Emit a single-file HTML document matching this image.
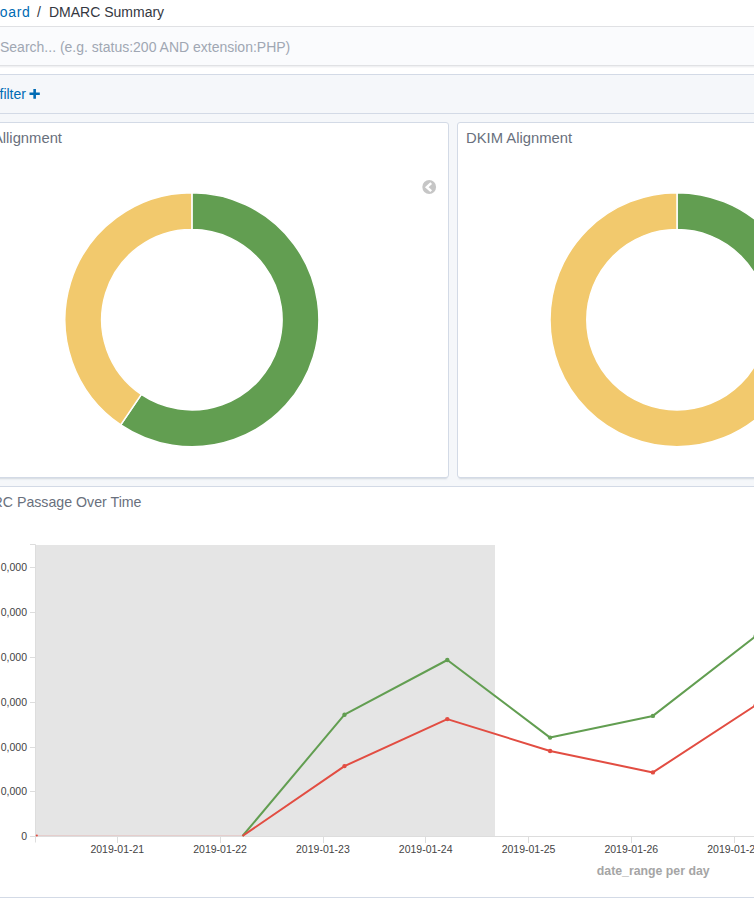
<!DOCTYPE html>
<html><head><meta charset="utf-8">
<style>
html,body{margin:0;padding:0;background:#fff;}
body{width:754px;height:898px;overflow:hidden;position:relative;font-family:"Liberation Sans",sans-serif;}
.a{position:absolute;}
.t{position:absolute;white-space:nowrap;line-height:1;}
</style></head>
<body>
<!-- breadcrumb -->
<div class="t" style="left:-0.2px;top:5px;font-size:14px;letter-spacing:0.65px;color:#006BB4;">oard</div>
<div class="t" style="left:37px;top:5px;font-size:14px;color:#343741;">/</div>
<div class="t" style="left:49px;top:5px;font-size:14px;color:#343741;">DMARC Summary</div>
<!-- search bar -->
<div class="a" style="left:0;top:26px;width:754px;height:1px;background:#E0E1E4;"></div>
<div class="a" style="left:0;top:27px;width:754px;height:38px;background:#FAFBFD;"></div>
<div class="a" style="left:0;top:65px;width:754px;height:1px;background:#E0E1E4;"></div>
<div class="a" style="left:0;top:66px;width:754px;height:1px;background:#F0F1F3;"></div>
<div class="a" style="left:0;top:67px;width:754px;height:1px;background:#F9F9FA;"></div>
<div class="t" style="left:0px;top:40px;font-size:14px;color:#A0A7B3;">Search... (e.g. status:200 AND extension:PHP)</div>
<!-- filter bar -->
<div class="a" style="left:0;top:74px;width:754px;height:1px;background:#D3DAE6;"></div>
<div class="a" style="left:0;top:75px;width:754px;height:38px;background:#F5F7FA;"></div>
<div class="a" style="left:0;top:113px;width:754px;height:1px;background:#D3DAE6;"></div>
<div class="t" style="left:-0.5px;top:87px;font-size:14px;color:#006BB4;">filter</div>
<svg class="a" style="left:0;top:80px" width="60" height="30" viewBox="0 80 60 30"><path d="M29.5,92.5H39.8V95.1H29.5Z M33.35,88.9H35.95V98.8H33.35Z" fill="#006BB4"/></svg>
<!-- dashboard bg -->
<div class="a" style="left:0;top:114px;width:754px;height:784px;background:#F5F7FA;"></div>
<!-- panel 1 -->
<div class="a" style="left:-40px;top:122px;width:487px;height:354px;background:#fff;border:1px solid #D3DAE6;border-radius:3px;box-shadow:0 1px 1px -1px rgba(152,162,179,0.2),0 3px 2px -2px rgba(152,162,179,0.35);"></div>
<div class="t" style="right:692px;top:131px;font-size:14.8px;color:#69707D;">SPF Allignment</div>
<!-- panel 2 -->
<div class="a" style="left:457px;top:122px;width:400px;height:354px;background:#fff;border:1px solid #D3DAE6;border-radius:3px;box-shadow:0 1px 1px -1px rgba(152,162,179,0.2),0 3px 2px -2px rgba(152,162,179,0.35);"></div>
<div class="t" style="left:466px;top:131px;font-size:14.8px;color:#69707D;">DKIM Alignment</div>
<!-- panel 3 -->
<div class="a" style="left:-40px;top:486px;width:900px;height:410px;background:#fff;border:1px solid #D3DAE6;border-radius:3px;"></div>
<div class="t" style="right:612.5px;top:494.7px;font-size:14.2px;color:#69707D;">DMARC Passage Over Time</div>

<!--CHART--><svg class="a" style="left:0;top:0;font-family:'Liberation Sans',sans-serif" width="754" height="898" viewBox="0 0 754 898">
<path d="M191.90,192.70A127,127 0 1 1 120.70,424.86L141.33,394.39A90.2,90.2 0 1 0 191.90,229.50Z" fill="#629E51" stroke="#fff" stroke-width="1.5"/>
<path d="M120.70,424.86A127,127 0 0 1 191.90,192.70L191.90,229.50A90.2,90.2 0 0 0 141.33,394.39Z" fill="#F2C96D" stroke="#fff" stroke-width="1.5"/>
<path d="M677.00,192.70A127,127 0 0 1 804.00,319.70L767.20,319.70A90.2,90.2 0 0 0 677.00,229.50Z" fill="#629E51" stroke="#fff" stroke-width="1.5"/>
<path d="M804.00,319.70A127,127 0 1 1 677.00,192.70L677.00,229.50A90.2,90.2 0 1 0 767.20,319.70Z" fill="#F2C96D" stroke="#fff" stroke-width="1.5"/>
<circle cx="429.2" cy="187" r="6.9" fill="#C6C6C6"/>
<path d="M431.2,183.2 L426.8,187.2 L431.2,191.2" fill="none" stroke="#fff" stroke-width="2.5"/>
<rect x="36" y="545" width="459" height="291" fill="#E5E5E5"/>
<path d="M30,544.5H35.5V836.5" fill="none" stroke="#DDDDDD" stroke-width="1"/>
<line x1="30" y1="836.5" x2="35.5" y2="836.5" stroke="#DDDDDD" stroke-width="1"/>
<line x1="30" y1="791.5" x2="35.5" y2="791.5" stroke="#DDDDDD" stroke-width="1"/>
<line x1="30" y1="747.5" x2="35.5" y2="747.5" stroke="#DDDDDD" stroke-width="1"/>
<line x1="30" y1="702.5" x2="35.5" y2="702.5" stroke="#DDDDDD" stroke-width="1"/>
<line x1="30" y1="657.5" x2="35.5" y2="657.5" stroke="#DDDDDD" stroke-width="1"/>
<line x1="30" y1="612.5" x2="35.5" y2="612.5" stroke="#DDDDDD" stroke-width="1"/>
<line x1="30" y1="567.5" x2="35.5" y2="567.5" stroke="#DDDDDD" stroke-width="1"/>
<line x1="35.5" y1="836.5" x2="754" y2="836.5" stroke="#DDDDDD" stroke-width="1"/>
<line x1="35.5" y1="836" x2="35.5" y2="842.5" stroke="#DDDDDD" stroke-width="1"/>
<rect x="117" y="837" width="1" height="6" fill="#DDDDDD"/>
<rect x="220" y="837" width="1" height="6" fill="#DDDDDD"/>
<rect x="323" y="837" width="1" height="6" fill="#DDDDDD"/>
<rect x="425" y="837" width="1" height="6" fill="#DDDDDD"/>
<rect x="528" y="837" width="1" height="6" fill="#DDDDDD"/>
<rect x="631" y="837" width="1" height="6" fill="#DDDDDD"/>
<rect x="734" y="837" width="1" height="6" fill="#DDDDDD"/>
<text x="27" y="840" text-anchor="end" font-size="10.5" fill="#444">0</text>
<text x="27" y="795" text-anchor="end" font-size="10.5" fill="#444">0,000</text>
<text x="27" y="751" text-anchor="end" font-size="10.5" fill="#444">0,000</text>
<text x="27" y="706" text-anchor="end" font-size="10.5" fill="#444">0,000</text>
<text x="27" y="661" text-anchor="end" font-size="10.5" fill="#444">0,000</text>
<text x="27" y="616" text-anchor="end" font-size="10.5" fill="#444">0,000</text>
<text x="27" y="571" text-anchor="end" font-size="10.5" fill="#444">0,000</text>
<text x="117.3" y="853" text-anchor="middle" font-size="10.5" fill="#444">2019-01-21</text>
<text x="220.1" y="853" text-anchor="middle" font-size="10.5" fill="#444">2019-01-22</text>
<text x="322.9" y="853" text-anchor="middle" font-size="10.5" fill="#444">2019-01-23</text>
<text x="425.7" y="853" text-anchor="middle" font-size="10.5" fill="#444">2019-01-24</text>
<text x="528.5" y="853" text-anchor="middle" font-size="10.5" fill="#444">2019-01-25</text>
<text x="631.3" y="853" text-anchor="middle" font-size="10.5" fill="#444">2019-01-26</text>
<text x="734.1" y="853" text-anchor="middle" font-size="10.5" fill="#444">2019-01-27</text>
<text x="653.2" y="874.5" text-anchor="middle" font-size="12.3" font-weight="bold" fill="#A5A5A5">date_range per day</text>
<line x1="36.5" y1="835.5" x2="242.5" y2="835.5" stroke="#E24D42" stroke-opacity="0.15" stroke-width="1"/>
<path d="M242.5,836 L344.5,714.7 L447.3,660.0 L550.1,737.6 L652.9,715.9 L755.7,636.1" fill="none" stroke="#629E51" stroke-width="2" stroke-linejoin="round"/>
<path d="M242.5,836 L344.5,766.1 L447.3,719.1 L550.1,751.0 L652.9,772.4 L755.7,705.3" fill="none" stroke="#E24D42" stroke-width="2" stroke-linejoin="round"/>
<circle cx="344.5" cy="714.7" r="2.2" fill="#629E51"/>
<circle cx="447.3" cy="660.0" r="2.2" fill="#629E51"/>
<circle cx="550.1" cy="737.6" r="2.2" fill="#629E51"/>
<circle cx="652.9" cy="715.9" r="2.2" fill="#629E51"/>
<circle cx="755.7" cy="636.1" r="2.2" fill="#629E51"/>
<circle cx="344.5" cy="766.1" r="2.2" fill="#E24D42"/>
<circle cx="447.3" cy="719.1" r="2.2" fill="#E24D42"/>
<circle cx="550.1" cy="751.0" r="2.2" fill="#E24D42"/>
<circle cx="652.9" cy="772.4" r="2.2" fill="#E24D42"/>
<circle cx="755.7" cy="705.3" r="2.2" fill="#E24D42"/>
<circle cx="36.8" cy="835.5" r="1.1" fill="#E24D42"/>
</svg><!--/CHART-->
</body></html>
